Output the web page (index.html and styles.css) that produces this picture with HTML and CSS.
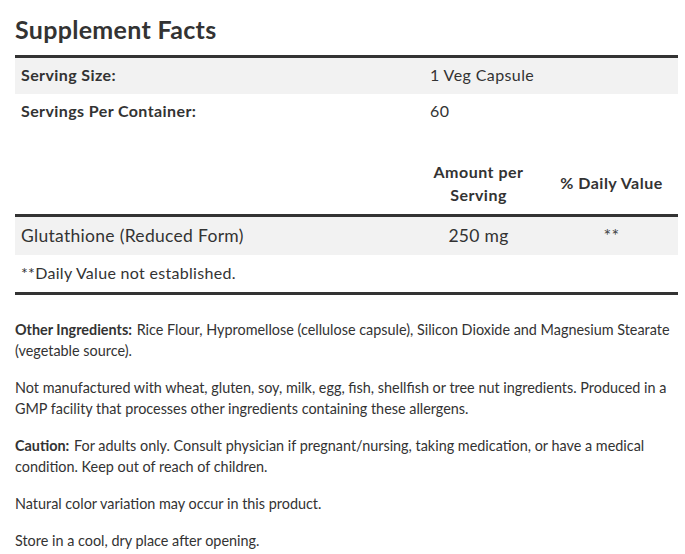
FILE: index.html
```html
<!DOCTYPE html>
<html lang="en">
<head>
<meta charset="utf-8">
<title>Supplement Facts</title>
<link rel="stylesheet" href="styles.css">
</head>
<body>
<div class="page">
  <h1 class="title">Supplement Facts</h1>
  <div class="facts">
    <div class="serv-row shaded">
      <span class="label">Serving Size:</span>
      <span class="value">1 Veg Capsule</span>
    </div>
    <div class="serv-row">
      <span class="label">Servings Per Container:</span>
      <span class="value">60</span>
    </div>
    <div class="head-row">
      <span></span>
      <span class="col-head">Amount per<br>Serving</span>
      <span class="col-head">% Daily Value</span>
    </div>
    <div class="ing-row shaded">
      <span class="ing-name">Glutathione (Reduced Form)</span>
      <span class="ing-amt">250 mg</span>
      <span class="ing-dv">**</span>
    </div>
    <div class="note-row">**Daily Value not established.</div>
  </div>
  <div class="notes">
    <p><b class="lead">Other Ingredients:</b> Rice Flour, Hypromellose (cellulose capsule), Silicon Dioxide and Magnesium Stearate (vegetable source).</p>
    <p>Not manufactured with wheat, gluten, soy, milk, egg, fish, shellfish or tree nut ingredients. Produced in a GMP facility that processes other ingredients containing these allergens.</p>
    <p><b class="lead">Caution:</b> For adults only. Consult physician if pregnant/nursing, taking medication, or have a medical condition. Keep out of reach of children.</p>
    <p>Natural color variation may occur in this product.</p>
    <p>Store in a cool, dry place after opening.</p>
  </div>
</div>
</body>
</html>
```
FILE: styles.css
```css
* { box-sizing: border-box; }
html, body { margin: 0; padding: 0; background: #fff; }
body {
  font-family: Lato, "Open Sans", sans-serif;
  color: #333;
}
.page {
  padding: 13px 7px 0 15px;
}
.title {
  margin: 0;
  font-size: 25px;
  font-weight: 700;
  line-height: 32px;
  letter-spacing: 0.3px;
  color: #333;
}
.facts {
  margin-top: 10px;
  border-top: 3px solid #333;
  border-bottom: 3px solid #333;
}
.shaded { background: #f2f2f2; }
.serv-row {
  display: grid;
  grid-template-columns: 1fr 248px;
  height: 36px;
  align-items: center;
  font-size: 16px;
  letter-spacing: 0.4px;
  padding-left: 6px;
  padding-bottom: 3px;
}
.serv-row .label { font-weight: 700; }
.head-row {
  display: grid;
  grid-template-columns: 1fr 133px 133px;
  height: 87px;
  align-items: center;
  padding-top: 21px;
  border-bottom: 3px solid #333;
  font-size: 16px;
  letter-spacing: 0.5px;
  font-weight: 700;
  line-height: 23px;
  text-align: center;
}
.ing-row {
  display: grid;
  grid-template-columns: 1fr 133px 133px;
  height: 38px;
  align-items: center;
  font-size: 17.5px;
  letter-spacing: 0.3px;
  padding-left: 6px;
  padding-bottom: 2px;
}
.ing-amt, .ing-dv { text-align: center; }
.ing-dv { font-size: 18px; color: #444; }
.note-row {
  height: 37px;
  line-height: 35px;
  padding-left: 6px;
  font-size: 16px;
  letter-spacing: 0.3px;
}
.notes {
  margin-top: 24px;
  font-size: 14.4px;
  line-height: 21px;
}
.notes p { margin: 0 0 16px; }
.notes .lead { font-weight: 700; margin-right: 1px; }
```
